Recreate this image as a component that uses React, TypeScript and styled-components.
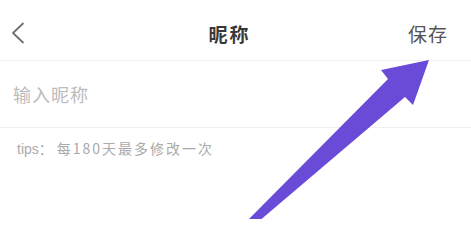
import styled, { createGlobalStyle } from "styled-components";

const GlobalStyle = createGlobalStyle`
  html, body {
    margin: 0;
    padding: 0;
    background: #ffffff;
    font-family: "Noto Sans CJK SC", "Liberation Sans", sans-serif;
  }
`;

const Page = styled.div`
  position: relative;
  width: 471px;
  height: 219px;
  overflow: hidden;
  background: #ffffff;
`;

const NavBar = styled.div`
  box-sizing: border-box;
  height: 61px;
  display: grid;
  grid-template-columns: 80px 1fr 80px;
  align-items: center;
  padding: 6px 23px 0 11px;
  border-bottom: 1px solid #f3f3f3;
`;

const BackButton = styled.button`
  border: none;
  background: transparent;
  padding: 0;
  width: 14px;
  height: 22px;
  display: flex;
  align-items: center;
  cursor: pointer;
`;

const Title = styled.h1`
  margin: 0;
  text-align: center;
  font-size: 19px;
  font-weight: 700;
  color: #383838;
  letter-spacing: 2px;
`;

const SaveButton = styled.button`
  border: none;
  background: transparent;
  padding: 0;
  justify-self: end;
  font-family: "Noto Sans CJK SC", sans-serif;
  font-size: 19px;
  color: #555555;
  letter-spacing: 1px;
  cursor: pointer;
`;

const InputRow = styled.div`
  height: 66px;
  display: flex;
  align-items: center;
  padding: 0 13px;
  border-bottom: 1px solid #f0f0f0;
`;

const NameInput = styled.input`
  flex: 1;
  border: none;
  outline: none;
  padding: 0;
  font-family: "Noto Sans CJK SC", sans-serif;
  font-size: 18px;
  letter-spacing: 1px;
  color: #333333;

  &::placeholder {
    color: #bcbcbc;
  }
`;

const Tips = styled.p`
  margin: 0;
  padding: 10px 17px;
  font-size: 14px;
  color: #aaaaaa;
  display: flex;
  gap: 4px;
`;

const TipsLabel = styled.span`
  font-family: "Liberation Sans", "Noto Sans CJK SC", sans-serif;
`;

const TipsText = styled.span`
  letter-spacing: 2px;
`;

const ArrowLayer = styled.svg`
  position: absolute;
  left: 0;
  top: 0;
  pointer-events: none;
`;

export default function App() {
  return (
    <Page>
      <GlobalStyle />
      <NavBar>
        <BackButton aria-label="back">
          <svg width="14" height="22" viewBox="0 0 14 22">
            <path
              d="M12 1.5 L2 11 L12 20.5"
              fill="none"
              stroke="#707070"
              strokeWidth="1.8"
              strokeLinecap="round"
              strokeLinejoin="round"
            />
          </svg>
        </BackButton>
        <Title>昵称</Title>
        <SaveButton>保存</SaveButton>
      </NavBar>
      <InputRow>
        <NameInput placeholder="输入昵称" />
      </InputRow>
      <Tips>
        <TipsLabel>tips：</TipsLabel>
        <TipsText>每180天最多修改一次</TipsText>
      </Tips>
      <ArrowLayer width="471" height="219" viewBox="0 0 471 219">
        <polygon
          points="429,60 413,105 405,97 258,222 246,222 388,79 381,70"
          fill="#6a4bd8"
        />
      </ArrowLayer>
    </Page>
  );
}
